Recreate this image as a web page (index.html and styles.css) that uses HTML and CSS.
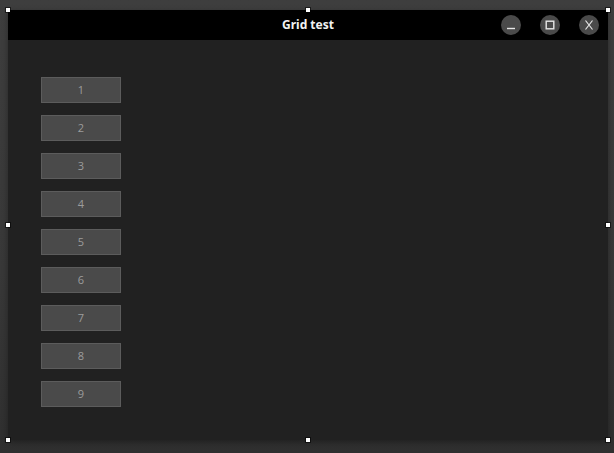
FILE: index.html
```html
<!DOCTYPE html>
<html>
<head>
<meta charset="utf-8">
<link rel="stylesheet" href="styles.css">
</head>
<body>
<div class="desktop">
  <div class="window">
    <div class="titlebar">
      <div class="title">Grid test</div>
      <div class="controls">
        <span class="ctl"><svg width="20" height="20" viewBox="0 0 20 20"><line x1="6" y1="13.5" x2="14" y2="13.5" stroke="#e6e6e6" stroke-width="1.4"/></svg></span>
        <span class="ctl"><svg width="20" height="20" viewBox="0 0 20 20"><rect x="6.2" y="6.2" width="7.6" height="7.6" fill="none" stroke="#e6e6e6" stroke-width="1.4"/></svg></span>
        <span class="ctl"><svg width="20" height="20" viewBox="0 0 20 20"><path d="M6.5 5.5 L13.5 14.5 M13.5 5.5 L6.5 14.5" fill="none" stroke="#e6e6e6" stroke-width="1.2"/></svg></span>
      </div>
    </div>
    <div class="content">
      <div class="grid">
        <div class="btn">1</div>
        <div class="btn">2</div>
        <div class="btn">3</div>
        <div class="btn">4</div>
        <div class="btn">5</div>
        <div class="btn">6</div>
        <div class="btn">7</div>
        <div class="btn">8</div>
        <div class="btn">9</div>
      </div>
    </div>
  </div>
  <span class="handle h-tl"></span>
  <span class="handle h-tm"></span>
  <span class="handle h-tr"></span>
  <span class="handle h-ml"></span>
  <span class="handle h-mr"></span>
  <span class="handle h-bl"></span>
  <span class="handle h-bm"></span>
  <span class="handle h-br"></span>
</div>
</body>
</html>
```
FILE: styles.css
```css
html, body {
  margin: 0;
  padding: 0;
  width: 614px;
  height: 453px;
  overflow: hidden;
}
body {
  background: #3a3a3a;
  font-family: "Open Sans", "Noto Sans", sans-serif;
}
.desktop {
  position: relative;
  width: 614px;
  height: 453px;
  box-sizing: border-box;
  padding: 10px 6px 13px 8px;
  background: linear-gradient(to bottom, #3e3e3e 0%, #383838 60%, #2f2f2f 100%);
}
.window {
  width: 600px;
  height: 430px;
  display: flex;
  flex-direction: column;
  background: #212121;
  box-shadow: 0 2px 6px rgba(0,0,0,0.35);
}
.titlebar {
  position: relative;
  height: 30px;
  background: #000;
  display: flex;
  align-items: center;
  justify-content: flex-end;
}
.title {
  position: absolute;
  left: 0;
  right: 0;
  top: 0;
  line-height: 30px;
  text-align: center;
  color: #f2f2f2;
  font-family: "Noto Sans", "Open Sans", sans-serif;
  font-weight: bold;
  font-size: 12px;
}
.controls {
  position: relative;
  display: flex;
  gap: 19px;
  padding-right: 9px;
}
.ctl {
  width: 20px;
  height: 20px;
  border-radius: 50%;
  background: #4a4a4a;
  display: flex;
}
.content {
  flex: 1;
  padding: 37px 0 0 33px;
}
.grid {
  display: grid;
  grid-template-columns: 80px;
  grid-auto-rows: 26px;
  row-gap: 12px;
}
.btn {
  box-sizing: border-box;
  background: #4a4a4a;
  border: 1px solid #5c5c5c;
  color: #9c9c9c;
  font-size: 11px;
  padding-bottom: 2px;
  display: flex;
  align-items: center;
  justify-content: center;
}
.handle {
  position: absolute;
  width: 4px;
  height: 4px;
  background: #fff;
  box-shadow: 0 0 0 1px rgba(0,0,0,0.55);
}
.h-tl { left: 6px; top: 8px; }
.h-tm { left: 306px; top: 8px; }
.h-tr { left: 606px; top: 8px; }
.h-ml { left: 6px; top: 223px; }
.h-mr { left: 606px; top: 223px; }
.h-bl { left: 6px; top: 438px; }
.h-bm { left: 306px; top: 438px; }
.h-br { left: 606px; top: 438px; }
```
